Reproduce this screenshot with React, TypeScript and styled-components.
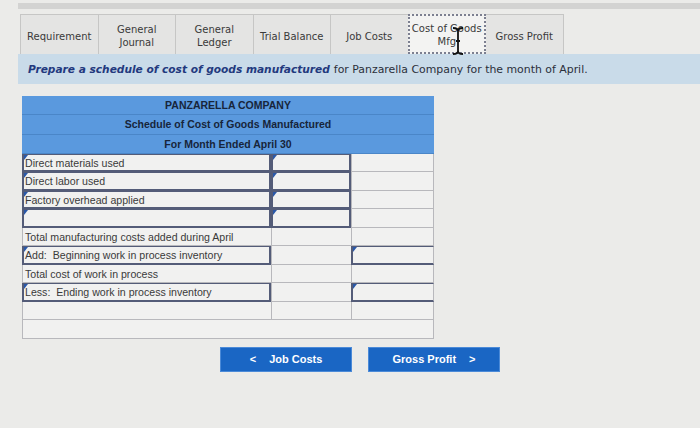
import React from "react";
import styled, { createGlobalStyle, css } from "styled-components";

const Global = createGlobalStyle`
  html, body { margin: 0; padding: 0; background: #ebebe9; }
  #root { width: 700px; height: 428px; overflow: hidden; }
`;

const Page = styled.div`
  position: relative;
  padding: 3px 0 0 18px;
  font-family: "DejaVu Sans", Verdana, sans-serif;
`;

const TopBar = styled.div`
  height: 6px;
  background: #d3d3d2;
  margin-bottom: 5px;
`;

const TabRow = styled.div`
  display: flex;
  margin-left: 2px;
  height: 40px;
`;

const Tab = styled.div<{ $active?: boolean }>`
  box-sizing: border-box;
  width: 78.5px;
  height: 40px;
  padding-top: 3px;
  display: flex;
  align-items: center;
  justify-content: center;
  text-align: center;
  font-size: 10px;
  line-height: 13px;
  color: #3a3a3a;
  background: #e4e4e3;
  border: 1px solid #c6c6c5;
  border-bottom: none;
  margin-right: -1px;
  ${(p) =>
    p.$active &&
    css`
      background: #f3f3f2;
      border: 2px dotted #7c7f90;
      border-bottom: 2px dotted #7c7f90;
      padding-top: 1px;
      position: relative;
      z-index: 1;
    `}
`;

const Instruction = styled.div`
  height: 30px;
  background: #c9dbe9;
  display: flex;
  align-items: center;
  padding-left: 10px;
  font-size: 10.9px;
  color: #2b2f3a;
`;

const Em = styled.span`
  font-weight: bold;
  font-style: italic;
  font-size: 10.6px;
  color: #23397e;
  margin-right: 4px;
`;

const Table = styled.div`
  margin: 12px 0 0 4px;
  width: 412px;
  display: grid;
  grid-template-columns: 249px 80px 83px;
  font-family: "Liberation Sans", Arial, sans-serif;
`;

const HeadRow = styled.div`
  grid-column: 1 / -1;
  height: 19.3px;
  box-sizing: border-box;
  background: #5a99de;
  border-bottom: 1px solid #4a86c8;
  display: flex;
  align-items: center;
  justify-content: center;
  font-size: 10.5px;
  font-weight: bold;
  color: #17253a;
`;

const Cell = styled.div<{ $input?: boolean; $span?: boolean }>`
  position: relative;
  box-sizing: border-box;
  height: 18.5px;
  background: #f1f1f0;
  border-left: 1px solid #b8b8bc;
  border-bottom: 1px solid #b8b8bc;
  display: flex;
  align-items: center;
  padding-left: 2px;
  font-size: 10.6px;
  color: #3a3a3a;
  white-space: pre;
  ${(p) => p.$span && css`grid-column: 1 / -1; border-right: 1px solid #b8b8bc;`}
  ${(p) =>
    p.$input &&
    css`
      border: 2px solid #545c78;
      border-top-width: 1px;
      padding-left: 1px;
      &::before {
        content: "";
        position: absolute;
        left: 0;
        top: 0;
        border-top: 5px solid #2a58a8;
        border-right: 4px solid transparent;
      }
    `}
`;

const LastCell = styled(Cell)`
  border-right: 1px solid #b8b8bc;
`;

const Buttons = styled.div`
  display: flex;
  gap: 16px;
  margin: 8px 0 0 202px;
`;

const NavButton = styled.div`
  box-sizing: border-box;
  width: 132px;
  height: 25px;
  background: #1a66c4;
  border: 1px solid #4b8ad8;
  color: #ffffff;
  font-family: "Liberation Sans", Arial, sans-serif;
  font-weight: bold;
  font-size: 11px;
  display: flex;
  align-items: center;
  justify-content: center;
  gap: 13px;
`;

const Cursor = styled.svg`
  position: absolute;
  left: 452px;
  top: 27px;
  z-index: 5;
`;

type Row = { label: string; c1?: boolean; c2?: boolean; c3?: boolean };

const rows: Row[] = [
  { label: "Direct materials used", c1: true, c2: true },
  { label: "Direct labor used", c1: true, c2: true },
  { label: "Factory overhead applied", c1: true, c2: true },
  { label: "", c1: true, c2: true },
  { label: "Total manufacturing costs added during April" },
  { label: "Add:  Beginning work in process inventory", c1: true, c3: true },
  { label: "Total cost of work in process" },
  { label: "Less:  Ending work in process inventory", c1: true, c3: true },
  { label: "" },
];

export default function App() {
  const tabs = [
    "Requirement",
    "General\nJournal",
    "General\nLedger",
    "Trial Balance",
    "Job Costs",
    "Cost of Goods\nMfg",
    "Gross Profit",
  ];
  return (
    <Page>
      <Global />
      <TopBar />
      <TabRow>
        {tabs.map((t, i) => (
          <Tab key={t} $active={i === 5}>
            <span>
              {t.split("\n").map((l, j) => (
                <React.Fragment key={j}>
                  {j > 0 && <br />}
                  {l}
                </React.Fragment>
              ))}
            </span>
          </Tab>
        ))}
      </TabRow>
      <Instruction>
        <Em>Prepare a schedule of cost of goods manufactured</Em>
        for Panzarella Company for the month of April.
      </Instruction>
      <Table>
        <HeadRow>PANZARELLA COMPANY</HeadRow>
        <HeadRow>Schedule of Cost of Goods Manufactured</HeadRow>
        <HeadRow>For Month Ended April 30</HeadRow>
        {rows.map((r, i) => (
          <React.Fragment key={i}>
            <Cell $input={r.c1}>{r.label}</Cell>
            <Cell $input={r.c2} />
            <LastCell $input={r.c3} />
          </React.Fragment>
        ))}
        <Cell $span />
      </Table>
      <Buttons>
        <NavButton>
          <span>&lt;</span>
          <span>Job Costs</span>
        </NavButton>
        <NavButton>
          <span>Gross Profit</span>
          <span>&gt;</span>
        </NavButton>
      </Buttons>
      <Cursor width="12" height="28" viewBox="0 0 12 28">
        <path
          d="M1 1 C4 1 6 2 6 4 L6 24 C6 26 4 27 1 27 M11 1 C8 1 6 2 6 4 M6 24 C6 26 8 27 11 27 M4 14 L8 14"
          fill="none"
          stroke="#111"
          strokeWidth="1.8"
        />
      </Cursor>
    </Page>
  );
}
